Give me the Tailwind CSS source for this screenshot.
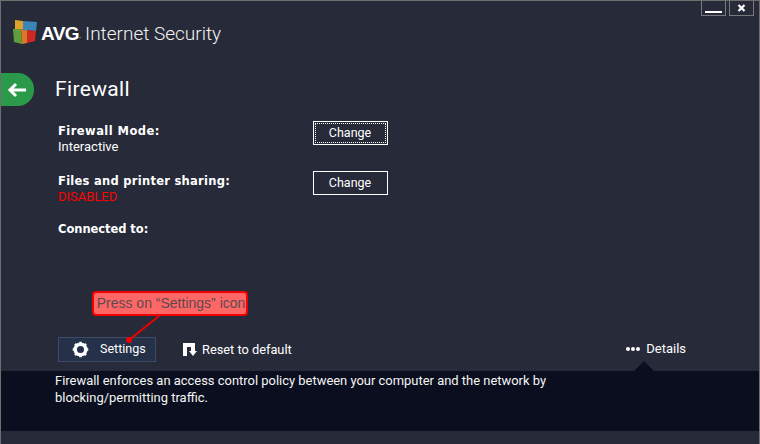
<!DOCTYPE html>
<html lang="en">
<head>
  <meta charset="UTF-8">
  <title>AVG Internet Security - Firewall</title>
  <script src="https://cdn.jsdelivr.net/npm/@tailwindcss/browser@4"></script>
</head>
<body class="bg-[#272a38] text-white overflow-hidden font-['Roboto',sans-serif]">
  <div class="relative w-[760px] h-[444px] border-x border-t border-[#6e6e6e] flex flex-col">

    <!-- Window buttons -->
    <div class="flex justify-end gap-[3px] pr-[5px] h-[15px]">
      <div class="w-[25px] h-[15px] border border-t-0 border-[#77797f] flex items-end justify-center pb-[2px]">
        <div class="w-[17px] h-[2px] bg-white"></div>
      </div>
      <div class="w-[25px] h-[15px] border border-t-0 border-[#77797f] flex items-center justify-center">
        <svg width="9" height="8" viewBox="0 0 9 8"><path d="M1.5 1 L7.5 7 M7.5 1 L1.5 7" stroke="#fff" stroke-width="2.2"/></svg>
      </div>
    </div>

    <!-- Logo -->
    <div class="flex items-center pl-[12px] h-[32px] mt-[1px]">
      <svg width="25" height="24" viewBox="0 0 25 24" class="mr-[3px] -mt-[2px]">
        <path d="M0 9 L8 8 L9 24 L1 22 Z" fill="#5f9e3c"/>
        <path d="M2 0 L10 1 L10 9 L2 9 Z" fill="#e0a12c"/>
        <path d="M8 9 L14 10 L14 23 L9 24 Z" fill="#d9772a"/>
        <path d="M10 1 L24 2 L23 11 L10 10 Z" fill="#3a86b8"/>
        <path d="M14 10 L23 11 L22 21 L14 23 Z" fill="#cf2a22"/>
      </svg>
      <span class="text-[19px] leading-none font-black tracking-[-0.6px] font-['Liberation_Sans',sans-serif]">AVG</span>
      <span class="text-white text-[8px] self-end mb-[7px] mr-[4px]">.</span>
      <span class="text-[19px] leading-none font-light text-[#f2f2f2]">Internet Security</span>
    </div>

    <!-- Title row -->
    <div class="flex items-center h-[33px] mt-[24px]">
      <div class="w-[33px] h-[33px] bg-[#2a9a4a] rounded-r-[16px] flex items-center justify-center pr-[1px]">
        <svg width="20" height="16" viewBox="0 0 20 16"><path d="M19 8 H3 M9 2 L3 8 L9 14" fill="none" stroke="#fff" stroke-width="3"/></svg>
      </div>
      <h1 class="ml-[21px] text-[21px] leading-none font-normal tracking-[0.35px]">Firewall</h1>
    </div>

    <!-- Settings rows -->
    <div class="pl-[57px] mt-[15px] w-[387px] flex flex-col">
      <div class="flex justify-between items-start h-[50px]">
        <div class="pt-[2px]">
          <div class="font-['DejaVu_Sans',sans-serif] font-bold text-[11.5px] leading-[16px] tracking-[0.45px]">Firewall Mode:</div>
          <div class="text-[13px] leading-[16px]">Interactive</div>
        </div>
        <div class="w-[75px] h-[24px] border border-white flex items-center justify-center text-[12.5px] pr-[1px] outline-1 outline-dotted outline-white -outline-offset-3">Change</div>
      </div>
      <div class="flex justify-between items-start h-[50px]">
        <div class="pt-[2px]">
          <div class="font-['DejaVu_Sans',sans-serif] font-bold text-[11.5px] leading-[16px] tracking-[0.27px]">Files and printer sharing:</div>
          <div class="text-[13px] leading-[16px] text-[#ff0000]">DISABLED</div>
        </div>
        <div class="w-[75px] h-[24px] border border-white flex items-center justify-center text-[12.5px] pr-[1px]">Change</div>
      </div>
      <div class="font-['DejaVu_Sans',sans-serif] font-bold text-[11.5px] leading-[16px] tracking-[-0.05px]">Connected to:</div>
    </div>

    <!-- Actions -->
    <div class="absolute left-[57px] right-[73px] top-[336px] flex items-center h-[25px]">
      <div class="w-[98px] h-[25px] bg-[#253049] border border-[#3e4a66] flex items-center pl-[13px] text-[12.5px]">
        <svg width="17" height="17" viewBox="0 0 24 24" class="mr-[11px]">
          <circle cx="12" cy="12" r="7.5" fill="none" stroke="#fff" stroke-width="5"/>
          <path d="M12 1 V5 M12 19 V23 M1 12 H5 M19 12 H23 M4.2 4.2 L7 7 M17 17 L19.8 19.8 M4.2 19.8 L7 17 M17 7 L19.8 4.2" stroke="#fff" stroke-width="3.5"/>
        </svg>
        Settings
      </div>
      <div class="flex items-center ml-[27px] text-[12.8px]">
        <svg width="14" height="14" viewBox="0 0 14 14" class="mr-[5px]">
          <path d="M0 0 H12 V8 H14 L10 13 L6 8 H8 V4 H4 V13 H0 Z" fill="#fff"/>
        </svg>
        Reset to default
      </div>
      <div class="ml-auto flex items-center text-[13px] -mt-[1px]">
        <div class="flex gap-[1px] mr-[6px]">
          <span class="w-[4px] h-[4px] rounded-full bg-white"></span>
          <span class="w-[4px] h-[4px] rounded-full bg-white"></span>
          <span class="w-[4px] h-[4px] rounded-full bg-white"></span>
        </div>
        Details
      </div>
    </div>

    <!-- Description panel -->
    <div class="absolute left-0 right-0 top-[370px] h-[60px] bg-[#0a0e1e] pl-[54px] pt-[1px] text-[12.95px] leading-[17px] text-[#f5f5f5]">
      <div class="absolute left-[633px] -top-[10px] w-0 h-0 border-x-[10px] border-x-transparent border-b-[10px] border-b-[#0a0e1e]"></div>
      <p class="w-[520px]">Firewall enforces an access control policy between your computer and the network by blocking/permitting traffic.</p>
    </div>

    <!-- Callout annotation -->
    <svg class="absolute left-0 top-0 pointer-events-none" width="760" height="444">
      <line x1="158" y1="315" x2="128" y2="339" stroke="#f00000" stroke-width="2"/>
      <circle cx="128" cy="339" r="3" fill="#f00000"/>
    </svg>
    <div class="absolute left-[91px] top-[290px] w-[156px] h-[25px] bg-[#ff6666] border-2 border-[#f00000] rounded-[4px] flex items-center justify-center pl-[2px] text-[14px] text-[#5d4a50] font-['Liberation_Sans',sans-serif] whitespace-nowrap">Press on “Settings” icon</div>
  </div>
</body>
</html>
